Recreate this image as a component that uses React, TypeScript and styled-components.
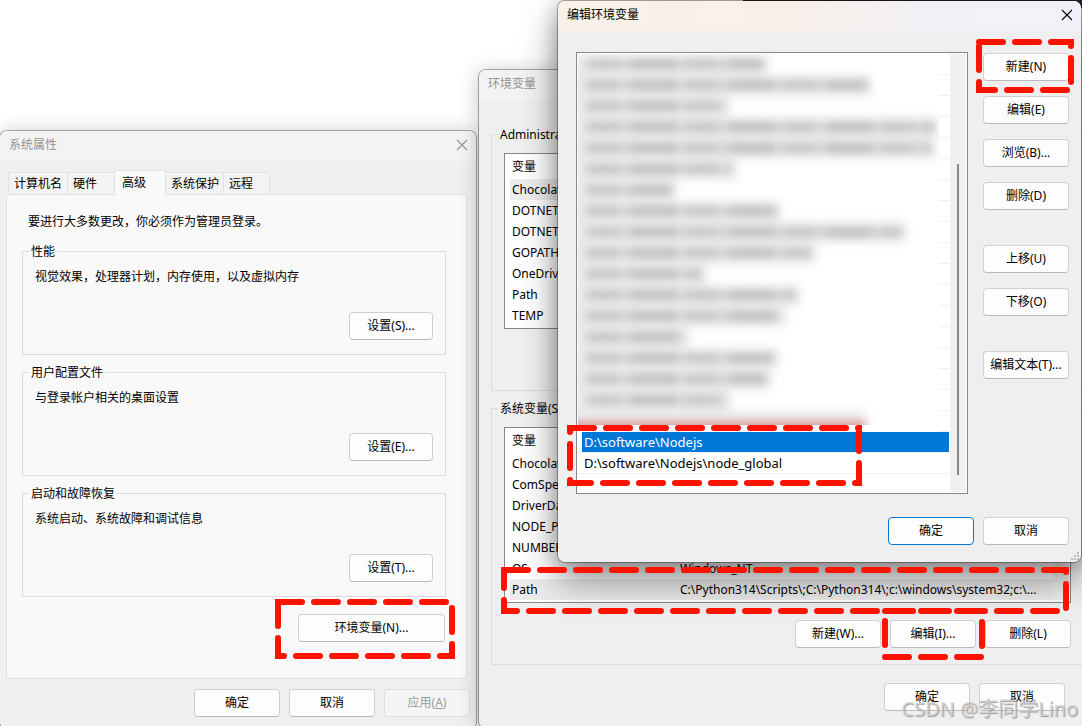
import React from "react";
import styled, { createGlobalStyle, css } from "styled-components";

const GlobalStyle = createGlobalStyle`
  *, *::before, *::after { box-sizing: border-box; }
  body {
    margin: 0;
    background: #ffffff;
    color: #000000;
    font-family: "Noto Sans", "Noto Sans CJK SC", sans-serif;
    font-size: 12px;
    line-height: 18px;
  }
  button { font: inherit; color: inherit; }
`;

const Desktop = styled.main`
  position: relative;
  height: 100vh;
  overflow: hidden;
  background: #ffffff;
`;

const BackdropEdge = styled.div`
  position: absolute;
  top: 0;
  left: 743px;
  right: 0;
  height: 8px;
  background: #2b2527;
`;

/* ---------- window chrome ---------- */

const Frame = styled.section<{ $x: number; $y: number; $w: number; $active?: boolean }>`
  position: absolute;
  left: ${(p) => p.$x}px;
  top: ${(p) => p.$y}px;
  width: ${(p) => p.$w}px;
  display: flex;
  flex-direction: column;
  border: 1px solid rgba(0, 0, 0, 0.3);
  border-radius: 8px;
  background: #efefef;
  background-clip: padding-box;
  box-shadow: ${(p) =>
    p.$active
      ? "0 18px 36px rgba(0, 0, 0, 0.4), 0 2px 20px rgba(0, 0, 0, 0.22)"
      : "0 2px 20px rgba(0, 0, 0, 0.22)"};
`;

const TitleBar = styled.header<{ $active?: boolean }>`
  display: flex;
  align-items: center;
  justify-content: space-between;
  height: 30px;
  padding: 0 0 2px 9px;
  border-radius: 7px 7px 0 0;
  background: ${(p) =>
    p.$active ? "linear-gradient(90deg, #faf1e8 0%, #f8f0ea 45%, #f2f1f8 75%, #f1f2f9 100%)" : "#f3f3f3"};
  color: ${(p) => (p.$active ? "#000000" : "#949494")};
`;

const Title = styled.h2`
  margin: 0;
  font-size: 12px;
  font-weight: 400;
`;

const CloseButton = styled.button`
  display: grid;
  place-items: center;
  width: 28px;
  height: 28px;
  padding: 0;
  border: 0;
  background: transparent;
`;

const Body = styled.div<{ $pad: string }>`
  display: flex;
  flex-direction: column;
  padding: ${(p) => p.$pad};
`;

/* ---------- controls ---------- */

const PushButton = styled.button<{ $w?: number; $primary?: boolean }>`
  width: ${(p) => p.$w ?? 86}px;
  height: 28px;
  padding: 0;
  border: 1px solid #d0d0d0;
  border-bottom-color: #bababa;
  border-radius: 4px;
  background: #fdfdfd;
  white-space: nowrap;
  ${(p) => p.$primary && css`border-color: #0078d4;`}
  &:disabled {
    border-color: #dedede;
    background: #f5f5f5;
    color: #9b9b9b;
  }
`;

const ButtonRow = styled.div<{ $pad?: string }>`
  display: flex;
  justify-content: flex-end;
  gap: 9px;
  min-height: 28px;
  padding: ${(p) => p.$pad ?? "0"};
`;

const Group = styled.fieldset`
  min-width: 0;
  margin: 0;
  padding: 0 6px;
  border: 1px solid #dcdcdc;
`;

const Legend = styled.legend`
  padding: 2px 2px 0;
  line-height: 14px;
  white-space: nowrap;
`;

const GroupBody = styled.div<{ $pad: string; $gap: number }>`
  display: flex;
  flex-direction: column;
  gap: ${(p) => p.$gap}px;
  padding: ${(p) => p.$pad};
`;

const GroupStack = styled.div`
  display: flex;
  flex-direction: column;
  gap: 9px;
`;

const Text = styled.p`
  margin: 0;
`;

/* ---------- system properties ---------- */

const TabList = styled.div`
  display: flex;
  align-items: flex-end;
  padding-left: 2px;
`;

const Tab = styled.button<{ $w: number }>`
  width: ${(p) => p.$w}px;
  height: 22px;
  padding: 0 0 0 5px;
  border: 1px solid #e2e2e2;
  border-bottom: 0;
  border-left-width: 0;
  background: #f3f3f3;
  text-align: left;
  white-space: nowrap;
  &:first-child { border-left-width: 1px; }
  &[aria-selected="true"] {
    z-index: 1;
    height: 25px;
    margin-bottom: -1px;
    padding-left: 7px;
    background: #f9f9f9;
  }
`;

const TabPanel = styled.div`
  display: flex;
  flex-direction: column;
  gap: 12px;
  padding: 18px 20px 36px 15px;
  border: 1px solid #e0e0e0;
  background: #f9f9f9;
`;

const Notice = styled.p`
  margin: 0;
  padding-left: 6px;
`;

/* ---------- variable lists ---------- */

const ListView = styled.div`
  display: flex;
  padding: 0 1px 2px 5px;
  border: 1px solid #828790;
  background: #ffffff;
`;

const VarTable = styled.table`
  flex: 1;
  width: 100%;
  border-collapse: collapse;
  table-layout: fixed;
  th, td {
    height: 21px;
    padding: 0 2px;
    font-weight: 400;
    text-align: left;
    white-space: nowrap;
    overflow: hidden;
    text-overflow: ellipsis;
  }
  th { height: 25px; }
  th:first-child { width: 168px; }
`;

const VarRow = styled.tr<{ $marked?: boolean }>`
  background: ${(p) => (p.$marked ? "#ececec" : "transparent")};
`;

const Track = styled.div`
  width: 16px;
  background: #f0f0f0;
`;

/* ---------- path editor ---------- */

const EditorMain = styled.div`
  display: flex;
  gap: 15px;
`;

const PathBox = styled.div`
  flex: 1;
  min-width: 0;
  display: flex;
  padding: 1px;
  border: 1px solid #828790;
  background: #ffffff;
`;

const PathList = styled.ul`
  flex: 1;
  min-width: 0;
  margin: 0;
  padding: 0 1px 18px 0;
  list-style: none;
`;

const PathRow = styled.li<{ $selected?: boolean }>`
  height: 21px;
  padding-left: 4px;
  border-bottom: 1px solid #efefef;
  font-size: 13px;
  span {
    display: block;
    height: 20px;
    padding-left: 2px;
    line-height: 20px;
    background: ${(p) => (p.$selected ? "#0078d7" : "transparent")};
    color: ${(p) => (p.$selected ? "#ffffff" : "#000000")};
  }
`;

const MaskedArea = styled.li`
  display: flex;
  height: 378px;
`;

const MaskedClip = styled.div`
  flex: 1;
  height: 371px;
  overflow: hidden;
`;

const MaskedRows = styled.div`
  margin-left: -12px;
  filter: blur(5px);
`;

const Smear = styled.div<{ $red?: boolean }>`
  height: 21px;
  padding: 6px 4px 7px 20px;
  background: #ebebeb;
  &::before {
    content: "";
    display: block;
    height: 8px;
    background: repeating-linear-gradient(90deg, #bcbcbc 0 34px, #d0d0d0 34px 44px, #b4b4b4 44px 92px, #dadada 92px 98px);
  }
  ${(p) =>
    p.$red &&
    css`
      background: linear-gradient(#ececec 35%, #e8a8a8 60%, #b86060 100%);
      &::before { background: transparent; }
    `}
`;

const RowTicks = styled.div`
  width: 10px;
  background: repeating-linear-gradient(#ffffff 0 20px, #efefef 20px 21px);
`;

const ScrollTrack = styled.div`
  display: flex;
  justify-content: center;
  width: 16px;
  padding: 110px 0 17px;
  background: #f0f0f0;
`;

const ScrollThumb = styled.div`
  width: 2px;
  background: #8a8a8a;
`;

const SideButtons = styled.div`
  display: flex;
  flex-direction: column;
  gap: 35px;
  padding-top: 1px;
`;

const ButtonStack = styled.div`
  display: flex;
  flex-direction: column;
  gap: 15px;
`;

const Grip = styled.svg`
  position: absolute;
  right: 1px;
  bottom: 1px;
`;

/* ---------- annotations ---------- */

const CalloutSvg = styled.svg<{ $x: number; $y: number }>`
  position: absolute;
  left: ${(p) => p.$x}px;
  top: ${(p) => p.$y}px;
  pointer-events: none;
`;

const Watermark = styled.div`
  position: absolute;
  right: 4px;
  bottom: 4px;
  color: rgba(210, 210, 210, 0.8);
  font-size: 20px;
  line-height: 26px;
  text-shadow: 1px 1px 1px rgba(120, 120, 120, 0.7);
  white-space: nowrap;
  pointer-events: none;
`;

function CloseIcon() {
  return (
    <svg width="12" height="12" viewBox="0 0 12 12" fill="none" stroke="currentColor" strokeWidth="1.1">
      <path d="M1 1 11 11M11 1 1 11" />
    </svg>
  );
}

type WindowProps = {
  title: string;
  x: number;
  y: number;
  w: number;
  active?: boolean;
  closable?: boolean;
  children: React.ReactNode;
};

function Window({ title, x, y, w, active, closable = true, children }: WindowProps) {
  return (
    <Frame $x={x} $y={y} $w={w} $active={active} aria-label={title}>
      <TitleBar $active={active}>
        <Title>{title}</Title>
        {closable && (
          <CloseButton aria-label="关闭">
            <CloseIcon />
          </CloseButton>
        )}
      </TitleBar>
      {children}
    </Frame>
  );
}

function Callout({ x, y, w, h }: { x: number; y: number; w: number; h: number }) {
  return (
    <CalloutSvg $x={x - 3} $y={y - 3} width={w + 6} height={h + 6} aria-hidden="true">
      <rect
        x="3"
        y="3"
        width={w}
        height={h}
        fill="none"
        stroke="#ff1200"
        strokeWidth="6"
        strokeLinecap="round"
        strokeDasharray="24 12"
      />
    </CalloutSvg>
  );
}

const tabs = [
  { label: "计算机名", w: 60 },
  { label: "硬件", w: 47 },
  { label: "高级", w: 51 },
  { label: "系统保护", w: 58 },
  { label: "远程", w: 46 },
];

const sections = [
  { legend: "性能", text: "视觉效果，处理器计划，内存使用，以及虚拟内存", button: "设置(S)..." },
  { legend: "用户配置文件", text: "与登录帐户相关的桌面设置", button: "设置(E)..." },
  { legend: "启动和故障恢复", text: "系统启动、系统故障和调试信息", button: "设置(T)..." },
];

function SystemProperties() {
  return (
    <Window title="系统属性" x={-1} y={130} w={478}>
      <Body $pad="9px 9px 0 6px">
        <TabList role="tablist">
          {tabs.map((t) => (
            <Tab key={t.label} role="tab" aria-selected={t.label === "高级"} $w={t.w}>
              {t.label}
            </Tab>
          ))}
        </TabList>
        <TabPanel role="tabpanel">
          <Notice>要进行大多数更改，你必须作为管理员登录。</Notice>
          <GroupStack>
            {sections.map((s) => (
              <Group key={s.legend}>
                <Legend>{s.legend}</Legend>
                <GroupBody $pad="9px 6px 14px" $gap={26}>
                  <Text>{s.text}</Text>
                  <ButtonRow>
                    <PushButton $w={84}>{s.button}</PushButton>
                  </ButtonRow>
                </GroupBody>
              </Group>
            ))}
          </GroupStack>
          <ButtonRow $pad="5px 1px 0 0">
            <PushButton $w={147}>环境变量(N)...</PushButton>
          </ButtonRow>
        </TabPanel>
      </Body>
      <ButtonRow $pad="10px 6px 12px">
        <PushButton>确定</PushButton>
        <PushButton>取消</PushButton>
        <PushButton disabled>
          应用(<u>A</u>)
        </PushButton>
      </ButtonRow>
    </Window>
  );
}

type Variable = { name: string; value?: string; marked?: boolean };

const userVars: Variable[] = [
  { name: "Chocolatey", marked: true },
  { name: "DOTNET_CLI" },
  { name: "DOTNET_ROOT" },
  { name: "GOPATH" },
  { name: "OneDrive" },
  { name: "Path" },
  { name: "TEMP" },
];

const systemVars: Variable[] = [
  { name: "Chocolatey" },
  { name: "ComSpec" },
  { name: "DriverData" },
  { name: "NODE_PATH" },
  { name: "NUMBER_OF_CPUS" },
  { name: "OS", value: "Windows_NT" },
  {
    name: "Path",
    value: "C:\\Python314\\Scripts\\;C:\\Python314\\;c:\\windows\\system32;c:\\...",
    marked: true,
  },
];

function VariableGroup({ legend, rows, buttons = [] }: { legend: string; rows: Variable[]; buttons?: string[] }) {
  return (
    <Group>
      <Legend>{legend}</Legend>
      <GroupBody $pad="11px 6px 16px" $gap={17}>
        <ListView>
          <VarTable>
            <thead>
              <tr>
                <th scope="col">变量</th>
                <th scope="col" aria-label="值" />
              </tr>
            </thead>
            <tbody>
              {rows.map((r) => (
                <VarRow key={r.name} $marked={r.marked}>
                  <td>{r.name}</td>
                  <td>{r.value}</td>
                </VarRow>
              ))}
            </tbody>
          </VarTable>
          <Track />
        </ListView>
        <ButtonRow>
          {buttons.map((b) => (
            <PushButton key={b}>{b}</PushButton>
          ))}
        </ButtonRow>
      </GroupBody>
    </Group>
  );
}

function EnvironmentVariables() {
  return (
    <Window title="环境变量" x={478} y={69} w={619} closable={false}>
      <Body $pad="26px 12px 17px">
        <GroupStack>
          <VariableGroup legend="Administrator 的用户变量(U)" rows={userVars} />
          <VariableGroup
            legend="系统变量(S)"
            rows={systemVars}
            buttons={["新建(W)...", "编辑(I)...", "删除(L)"]}
          />
        </GroupStack>
        <ButtonRow $pad="18px 19px 0 0">
          <PushButton>确定</PushButton>
          <PushButton>取消</PushButton>
        </ButtonRow>
      </Body>
    </Window>
  );
}

const maskedWidths = [
  202, 305, 164, 372, 369, 170, 110, 214, 340, 250, 140, 234, 220, 123, 212, 205, 164, 300,
];

const sideButtons = [
  ["新建(N)", "编辑(E)", "浏览(B)...", "删除(D)"],
  ["上移(U)", "下移(O)"],
  ["编辑文本(T)..."],
];

function PathEditor() {
  return (
    <Window title="编辑环境变量" x={557} y={0} w={525} active>
      <Body $pad="21px 12px 17px 18px">
        <EditorMain>
          <PathBox>
            <PathList>
              <MaskedArea aria-hidden="true">
                <MaskedClip>
                  <MaskedRows>
                    {maskedWidths.map((w, i) => (
                      <Smear key={i} $red={i === maskedWidths.length - 1} style={{ width: w }} />
                    ))}
                  </MaskedRows>
                </MaskedClip>
                <RowTicks />
              </MaskedArea>
              <PathRow $selected>
                <span>D:\software\Nodejs</span>
              </PathRow>
              <PathRow>
                <span>D:\software\Nodejs\node_global</span>
              </PathRow>
            </PathList>
            <ScrollTrack>
              <ScrollThumb />
            </ScrollTrack>
          </PathBox>
          <SideButtons>
            {sideButtons.map((group) => (
              <ButtonStack key={group[0]}>
                {group.map((b) => (
                  <PushButton key={b}>{b}</PushButton>
                ))}
              </ButtonStack>
            ))}
          </SideButtons>
        </EditorMain>
        <ButtonRow $pad="23px 0 0">
          <PushButton $primary>确定</PushButton>
          <PushButton>取消</PushButton>
        </ButtonRow>
      </Body>
      <Grip width="9" height="9" viewBox="0 0 9 9" fill="#bdbdbd" aria-hidden="true">
        <path d="M6 0h2v2h-2zM3 3h2v2h-2zM6 3h2v2h-2zM0 6h2v2h-2zM3 6h2v2h-2zM6 6h2v2h-2z" />
      </Grip>
    </Window>
  );
}

export default function App() {
  return (
    <>
      <GlobalStyle />
      <Desktop>
        <BackdropEdge />
        <SystemProperties />
        <EnvironmentVariables />
        <PathEditor />
        <Callout x={278} y={602} w={174} h={54} />
        <Callout x={979} y={42} w={92} h={48} />
        <Callout x={570} y={428} w={289} h={55} />
        <Callout x={504} y={570} w={562} h={41} />
        <Callout x={885} y={611} w={97} h={46} />
        <Watermark>CSDN @李同学Lino</Watermark>
      </Desktop>
    </>
  );
}
